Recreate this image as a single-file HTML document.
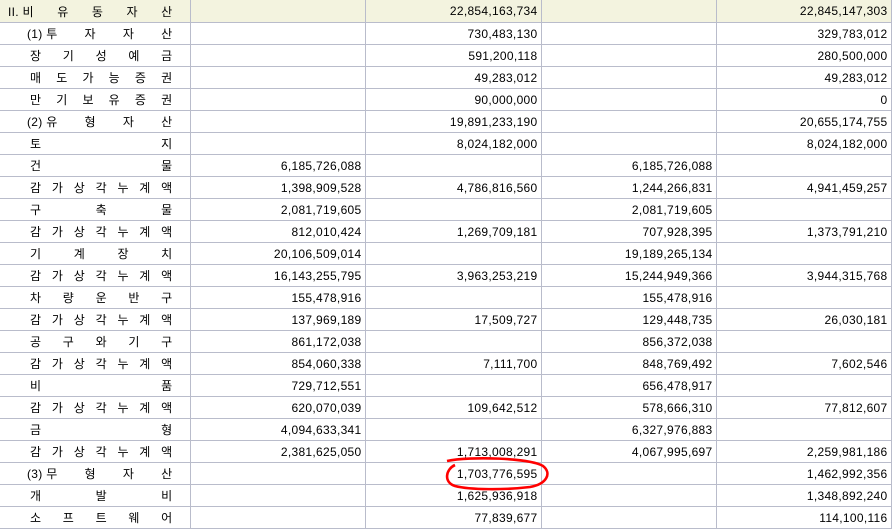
<!DOCTYPE html>
<html><head><meta charset="utf-8"><style>
body{margin:0;width:893px;height:531px;overflow:hidden;background:#fff;font-family:"Liberation Sans","Noto Sans CJK KR",sans-serif;font-size:12px;color:#000}
table{border-collapse:collapse;table-layout:fixed;position:absolute;left:0;top:0}
td{border:1px solid #b9bccb;height:21px;padding:0 3px 0 0;text-align:right;white-space:nowrap;letter-spacing:0.3px;overflow:hidden}
tr:first-child td{background:#f3f3df;border-top:none;height:22px}
td:first-child{border-left:none;padding:0}
.l{display:flex;justify-content:space-between;margin:0 17px 0 30px}
.l.i{margin-left:8px}
.l.p{margin-left:27px}
</style></head><body>
<table>
<colgroup><col style="width:190px"><col style="width:175px"><col style="width:176px"><col style="width:175px"><col style="width:175px"></colgroup>
<tr><td><div class="l i"><span>II. 비</span><span>유</span><span>동</span><span>자</span><span>산</span></div></td><td></td><td>22,854,163,734</td><td></td><td>22,845,147,303</td></tr>
<tr><td><div class="l p"><span>(1) 투</span><span>자</span><span>자</span><span>산</span></div></td><td></td><td>730,483,130</td><td></td><td>329,783,012</td></tr>
<tr><td><div class="l"><span>장</span><span>기</span><span>성</span><span>예</span><span>금</span></div></td><td></td><td>591,200,118</td><td></td><td>280,500,000</td></tr>
<tr><td><div class="l"><span>매</span><span>도</span><span>가</span><span>능</span><span>증</span><span>권</span></div></td><td></td><td>49,283,012</td><td></td><td>49,283,012</td></tr>
<tr><td><div class="l"><span>만</span><span>기</span><span>보</span><span>유</span><span>증</span><span>권</span></div></td><td></td><td>90,000,000</td><td></td><td>0</td></tr>
<tr><td><div class="l p"><span>(2) 유</span><span>형</span><span>자</span><span>산</span></div></td><td></td><td>19,891,233,190</td><td></td><td>20,655,174,755</td></tr>
<tr><td><div class="l"><span>토</span><span>지</span></div></td><td></td><td>8,024,182,000</td><td></td><td>8,024,182,000</td></tr>
<tr><td><div class="l"><span>건</span><span>물</span></div></td><td>6,185,726,088</td><td></td><td>6,185,726,088</td><td></td></tr>
<tr><td><div class="l"><span>감</span><span>가</span><span>상</span><span>각</span><span>누</span><span>계</span><span>액</span></div></td><td>1,398,909,528</td><td>4,786,816,560</td><td>1,244,266,831</td><td>4,941,459,257</td></tr>
<tr><td><div class="l"><span>구</span><span>축</span><span>물</span></div></td><td>2,081,719,605</td><td></td><td>2,081,719,605</td><td></td></tr>
<tr><td><div class="l"><span>감</span><span>가</span><span>상</span><span>각</span><span>누</span><span>계</span><span>액</span></div></td><td>812,010,424</td><td>1,269,709,181</td><td>707,928,395</td><td>1,373,791,210</td></tr>
<tr><td><div class="l"><span>기</span><span>계</span><span>장</span><span>치</span></div></td><td>20,106,509,014</td><td></td><td>19,189,265,134</td><td></td></tr>
<tr><td><div class="l"><span>감</span><span>가</span><span>상</span><span>각</span><span>누</span><span>계</span><span>액</span></div></td><td>16,143,255,795</td><td>3,963,253,219</td><td>15,244,949,366</td><td>3,944,315,768</td></tr>
<tr><td><div class="l"><span>차</span><span>량</span><span>운</span><span>반</span><span>구</span></div></td><td>155,478,916</td><td></td><td>155,478,916</td><td></td></tr>
<tr><td><div class="l"><span>감</span><span>가</span><span>상</span><span>각</span><span>누</span><span>계</span><span>액</span></div></td><td>137,969,189</td><td>17,509,727</td><td>129,448,735</td><td>26,030,181</td></tr>
<tr><td><div class="l"><span>공</span><span>구</span><span>와</span><span>기</span><span>구</span></div></td><td>861,172,038</td><td></td><td>856,372,038</td><td></td></tr>
<tr><td><div class="l"><span>감</span><span>가</span><span>상</span><span>각</span><span>누</span><span>계</span><span>액</span></div></td><td>854,060,338</td><td>7,111,700</td><td>848,769,492</td><td>7,602,546</td></tr>
<tr><td><div class="l"><span>비</span><span>품</span></div></td><td>729,712,551</td><td></td><td>656,478,917</td><td></td></tr>
<tr><td><div class="l"><span>감</span><span>가</span><span>상</span><span>각</span><span>누</span><span>계</span><span>액</span></div></td><td>620,070,039</td><td>109,642,512</td><td>578,666,310</td><td>77,812,607</td></tr>
<tr><td><div class="l"><span>금</span><span>형</span></div></td><td>4,094,633,341</td><td></td><td>6,327,976,883</td><td></td></tr>
<tr><td><div class="l"><span>감</span><span>가</span><span>상</span><span>각</span><span>누</span><span>계</span><span>액</span></div></td><td>2,381,625,050</td><td>1,713,008,291</td><td>4,067,995,697</td><td>2,259,981,186</td></tr>
<tr><td><div class="l p"><span>(3) 무</span><span>형</span><span>자</span><span>산</span></div></td><td></td><td>1,703,776,595</td><td></td><td>1,462,992,356</td></tr>
<tr><td><div class="l"><span>개</span><span>발</span><span>비</span></div></td><td></td><td>1,625,936,918</td><td></td><td>1,348,892,240</td></tr>
<tr><td><div class="l"><span>소</span><span>프</span><span>트</span><span>웨</span><span>어</span></div></td><td></td><td>77,839,677</td><td></td><td>114,100,116</td></tr>
</table>
<svg width="893" height="531" style="position:absolute;left:0;top:0" viewBox="0 0 893 531">
<path d="M447 461 C470 456,530 458,543 466 C552 473,547 484,530 487 C505 490,470 490,455 486 C443 482,446 469,455 465" fill="none" stroke="#f00" stroke-width="2.6"/>
</svg>
</body></html>
